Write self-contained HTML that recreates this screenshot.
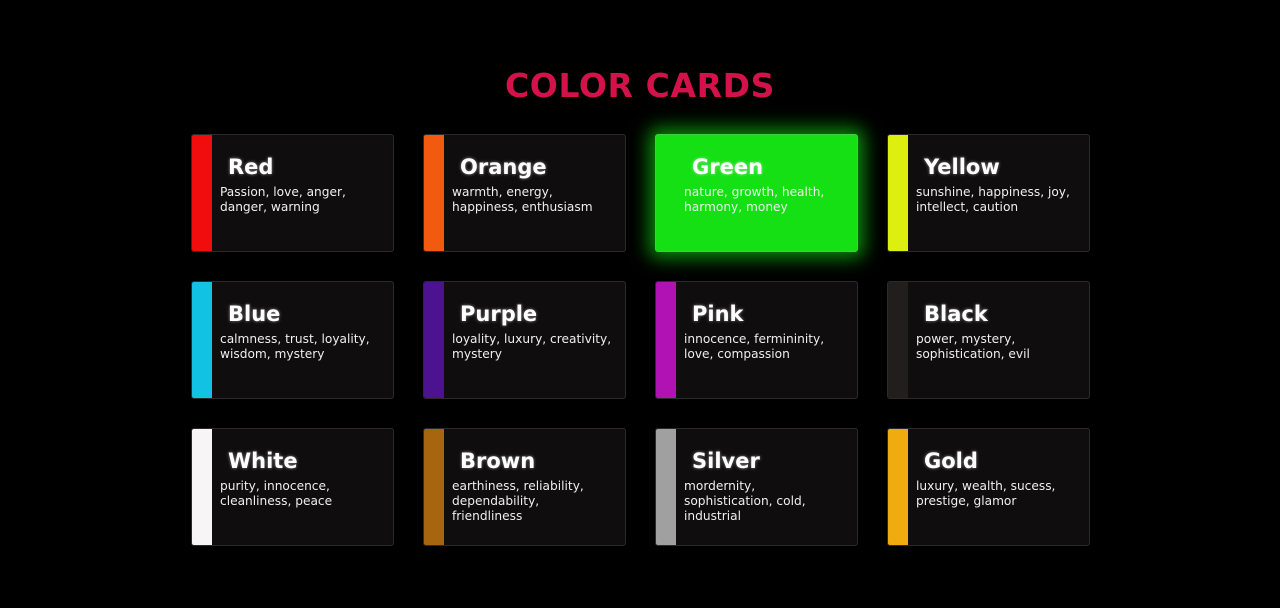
<!DOCTYPE html>
<html><head><style>
body{margin:0;background:#000;width:1280px;height:608px;overflow:hidden;font-family:"DejaVu Sans","Liberation Sans",sans-serif;}
h1{position:absolute;top:66px;left:0;width:1280px;text-align:center;margin:0;font-size:33px;font-weight:bold;color:#d4124a;letter-spacing:0.6px;}
.c{position:absolute;width:201px;height:116px;background:#0f0d0e;border:1px solid #2a2a2a;border-radius:3px;overflow:hidden;}
.s{position:absolute;left:0;top:0;bottom:0;width:20px;}
.t{position:absolute;left:36px;top:20px;font-size:21px;font-weight:bold;color:#fff;text-shadow:0 0 3px rgba(255,255,255,.5);}
.d{position:absolute;left:28px;top:50px;width:160px;font-size:12.2px;line-height:15px;color:#eee;}
.g{background:#14e014;border-color:#4c4;box-shadow:0 0 18px 6px rgba(16,200,16,.7);overflow:visible;}
</style></head><body>
<h1>COLOR CARDS</h1>
<div class="c" style="left:191px;top:134px"><div class="s" style="background:#f10d0d"></div><div class="t">Red</div><div class="d">Passion, love, anger, danger, warning</div></div>
<div class="c" style="left:423px;top:134px"><div class="s" style="background:#f25a10"></div><div class="t">Orange</div><div class="d">warmth, energy, happiness, enthusiasm</div></div>
<div class="c g" style="left:655px;top:134px"><div class="t">Green</div><div class="d">nature, growth, health, harmony, money</div></div>
<div class="c" style="left:887px;top:134px"><div class="s" style="background:#dcef0e"></div><div class="t">Yellow</div><div class="d">sunshine, happiness, joy, intellect, caution</div></div>
<div class="c" style="left:191px;top:281px"><div class="s" style="background:#11c2e2"></div><div class="t">Blue</div><div class="d">calmness, trust, loyality, wisdom, mystery</div></div>
<div class="c" style="left:423px;top:281px"><div class="s" style="background:#4c1290"></div><div class="t">Purple</div><div class="d">loyality, luxury, creativity, mystery</div></div>
<div class="c" style="left:655px;top:281px"><div class="s" style="background:#b112b4"></div><div class="t">Pink</div><div class="d">innocence, fermininity, love, compassion</div></div>
<div class="c" style="left:887px;top:281px"><div class="s" style="background:#221e1e"></div><div class="t">Black</div><div class="d">power, mystery, sophistication, evil</div></div>
<div class="c" style="left:191px;top:428px"><div class="s" style="background:#f7f5f5"></div><div class="t">White</div><div class="d">purity, innocence, cleanliness, peace</div></div>
<div class="c" style="left:423px;top:428px"><div class="s" style="background:#a6650e"></div><div class="t">Brown</div><div class="d">earthiness, reliability, dependability, friendliness</div></div>
<div class="c" style="left:655px;top:428px"><div class="s" style="background:#a0a0a0"></div><div class="t">Silver</div><div class="d">mordernity,<br>sophistication, cold, industrial</div></div>
<div class="c" style="left:887px;top:428px"><div class="s" style="background:#f0ac0e"></div><div class="t">Gold</div><div class="d">luxury, wealth, sucess, prestige, glamor</div></div>
</body></html>
